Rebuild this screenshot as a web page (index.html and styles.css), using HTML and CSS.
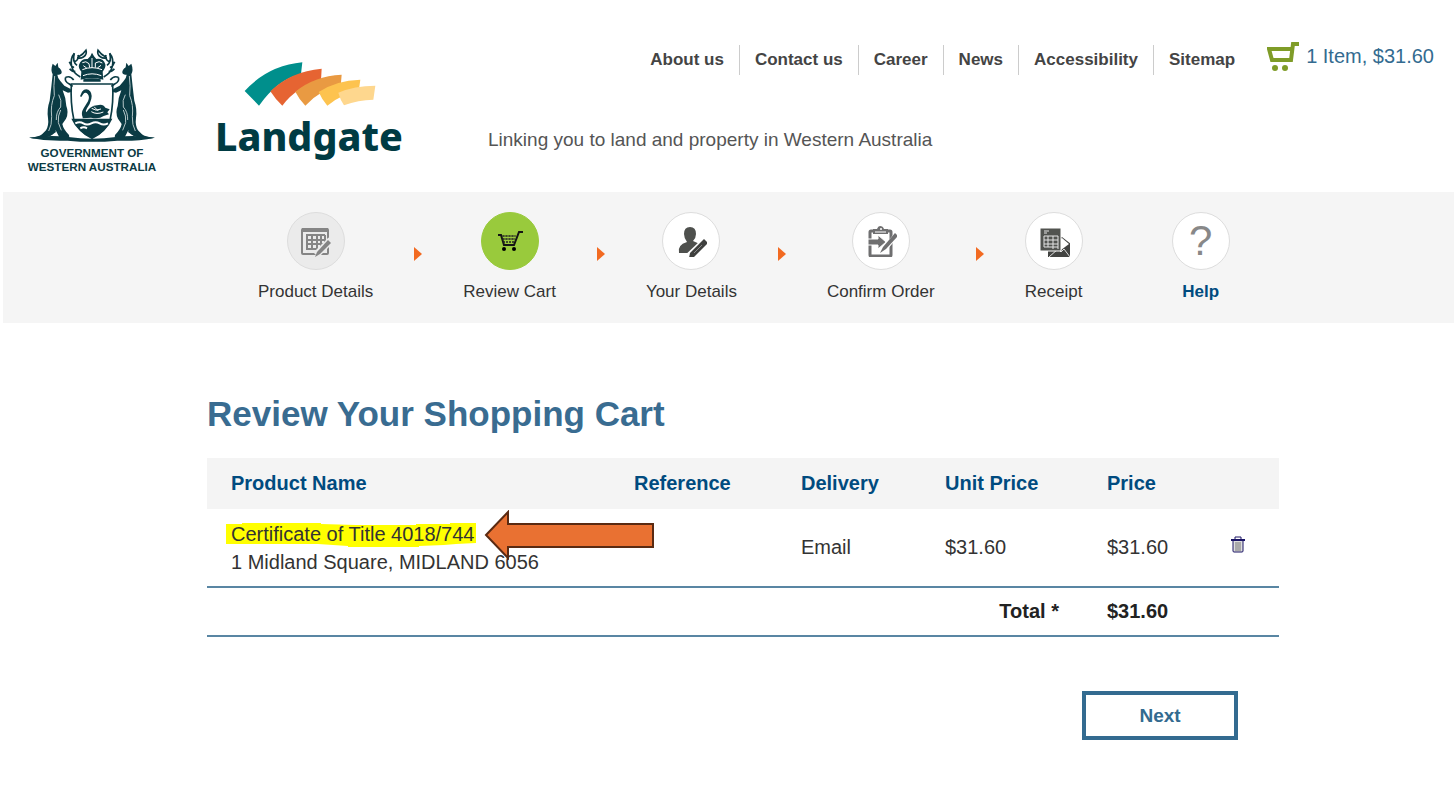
FILE: index.html
```html
<!DOCTYPE html>
<html lang="en">
<head>
    <meta charset="UTF-8">
    <meta name="viewport" content="width=device-width, initial-scale=1.0">
    <title>Landgate - Review Your Shopping Cart</title>
    <link rel="stylesheet" href="styles.css">
</head>
<body>
    <header class="header">
        <svg class="crest" viewBox="0 0 435 420" role="img" aria-label="Government of Western Australia">
            <defs>
                <g id="supporter">
                    <path d="M98 71 L106 78 L113 68 L115 82 Q126 90 125 98 Q123 104 112 104 Q113 114 121 123 L133 137 L152 147 L154 156 L144 158 L128 151 Q138 174 139 198 Q147 218 138 236 L127 252 Q130 268 147 285 L148 293 L118 292 L107 271 L98 283 L68 294 L60 289 L78 271 Q87 256 84 234 Q80 208 89 182 Q92 158 94 140 L98 103 Q91 90 98 71 Z"/>
                    <path d="M89 231 Q91 262 78 275 Q64 290 28 293 Q58 300 90 289 L108 276 Z"/>
                    <path class="crest-line" d="M137 112 Q151 106 161 120 M137 112 Q132 124 148 132 L158 139"/>
                    <path class="crest-hair" d="M104 108 Q100 137 103 167 Q91 195 95 230 Q96 255 86 273 M116 164 Q126 180 122 201 Q108 216 109 240 M122 210 Q113 227 115 248 L124 271"/>
                </g>
            </defs>
            <g class="crest-ink">
                <use href="#supporter"/>
                <use href="#supporter" transform="translate(432 0) scale(-1 1)"/>
                <path d="M27 293 Q90 284 145 291 Q216 302 288 291 Q345 284 405 293 Q345 305 292 302 Q216 309 143 302 Q84 305 27 293 Z"/>
                <path d="M154 236 H277 Q261 275 216 295 Q171 275 154 236 Z"/>
                <path d="M188 232 Q182 219 191 205 L204 184 Q210 170 203 162 Q196 155 190 162 L184 171 L180 169 L186 155 Q194 145 205 149 Q218 157 214 176 Q211 191 201 205 Q196 213 199 217 Q211 197 231 196 Q249 190 256 203 L269 208 L262 217 L267 223 L251 228 Q237 238 213 233 L188 235 Z"/>
                <path d="M177 74 Q183 55 203 57 L211 49 L216 38 L222 49 L229 57 Q250 54 256 73 Q258 83 248 95 L250 119 Q216 111 182 119 L184 95 Q174 83 177 74 Z"/>
            </g>
            <path class="crest-line" d="M154 132 H278 Q281 190 271 236 Q258 274 216 295 Q174 274 161 236 Q151 190 154 132 Z"/>
            <path class="crest-water" d="M166 250 Q179 243 190 250 T214 250 T239 250 T264 250 M181 265 Q191 259 201 265"/>
            <path class="crest-white" d="M215 205 Q227 215 243 207 M214 215 Q230 225 250 216 M222 200 L235 213 M187 89 Q216 77 246 89 M189 107 Q216 96 244 107 M187 68 Q198 61 207 71 L209 83 M226 83 L226 69 Q238 61 247 69 M216 54 V84 M190 77 L200 84 M232 84 L243 76"/>
            <path class="crest-line" d="M181 111 Q159 99 155 79 Q150 55 163 40 Q156 65 171 76 M164 65 Q178 59 174 45 M162 83 Q151 76 148 65 M166 94 Q155 95 149 86 M176 50 Q189 44 198 31 Q202 44 190 51 Q181 57 171 53 M251 111 Q273 99 277 79 Q282 55 269 40 Q276 65 261 76 M268 65 Q254 59 258 45 M270 83 Q281 76 284 65 M266 94 Q277 95 283 86 M256 50 Q243 44 234 31 Q230 44 242 51 Q251 57 261 53"/>
            <path class="crest-ink" d="M190 118 Q216 112 242 118 V125 H190 Z"/>
            <text class="crest-text" x="216" y="351">GOVERNMENT OF</text>
            <text class="crest-text" x="216" y="392">WESTERN AUSTRALIA</text>
        </svg>

        <svg class="logo" viewBox="0 0 630 360" role="img" aria-label="Landgate">
            <path fill="#008f8c" d="M119 123 Q188 47 292 37 L288 72 Q218 88 162 167 Z"/>
            <path fill="#e66432" d="M196 124 Q257 64 350 56 L348 91 Q275 110 232 167 Q211 148 196 124 Z"/>
            <path fill="#e99a42" d="M271 125 Q328 78 410 74 L407 109 Q345 119 301 167 Q283 149 271 125 Z"/>
            <path fill="#fdc34f" d="M341 126 Q393 91 466 89 L461 124 Q410 132 367 167 Q351 149 341 126 Z"/>
            <path fill="#fed78e" d="M400 128 Q448 107 511 107 L505 149 Q460 150 417 166 Q406 150 400 128 Z"/>
            <text class="logo-text" x="30" y="303">Landgate</text>
        </svg>

        <div class="header-main">
            <div class="header-top">
                <nav class="nav">
                    <a href="#">About us</a>
                    <a href="#">Contact us</a>
                    <a href="#">Career</a>
                    <a href="#">News</a>
                    <a href="#">Accessibility</a>
                    <a href="#">Sitemap</a>
                </nav>
                <a class="cart" href="#">
                    <svg class="cart-icon" viewBox="0 0 32 30" aria-hidden="true">
                        <path d="M32 2 H26 L24 18 H5 L2 7 H25" fill="none" stroke="#7f9c28" stroke-width="4"/>
                        <circle cx="8" cy="26" r="3" fill="#7f9c28"/>
                        <circle cx="18" cy="26" r="3" fill="#7f9c28"/>
                    </svg>
                    <span>1 Item, $31.60</span>
                </a>
            </div>
            <p class="tagline">Linking you to land and property in Western Australia</p>
        </div>
    </header>

    <ol class="steps">
        <li class="step">
            <span class="step-icon done">
                <svg viewBox="0 0 32 32" aria-hidden="true">
                    <rect x="2" y="4" width="26" height="25" rx="1" fill="none" stroke="#858585" stroke-width="2"/>
                    <path d="M2 5 H28" stroke="#858585" stroke-width="4"/>
                    <path d="M6 10 H25 M6 15 H25 M6 19 H25 M6 24 H20 M7 10 V25 M12 10 V25 M17 10 V25 M21 10 V22 M25 10 V18" fill="none" stroke="#858585" stroke-width="2"/>
                    <path d="M16 30 L31 15" stroke="#ebebeb" stroke-width="7"/>
                    <path d="M15 32 L17 27 L28 15 L31 18 L20 29 Z" fill="#858585"/>
                </svg>
            </span>
            <span>Product Details</span>
        </li>
        <li class="step-arrow"></li>
        <li class="step">
            <span class="step-icon current">
                <svg viewBox="0 0 32 32" aria-hidden="true">
                    <path d="M4 10 H7 L10 20 H20 L25 7 H29" fill="none" stroke="#151515" stroke-width="2"/>
                    <path d="M8 11 H22 M8 14 H21 M9 17 H20 M10 10 V19 M13 10 V19 M16 10 V19 M19 10 V19" stroke="#222" stroke-width="1" stroke-dasharray="2 1"/>
                    <circle cx="10" cy="24" r="2"/>
                    <circle cx="20" cy="24" r="2"/>
                </svg>
            </span>
            <span>Review Cart</span>
        </li>
        <li class="step-arrow"></li>
        <li class="step">
            <span class="step-icon">
                <svg viewBox="0 0 32 32" aria-hidden="true">
                    <path d="M15 2 Q21 2 21 9 Q21 13 18 16 L27 20 L22 28 H4 Q2 20 12 17 Q9 13 9 9 Q9 2 15 2 Z" fill="#4e504d"/>
                    <path d="M14 32 L32 15" stroke="#fff" stroke-width="8"/>
                    <path d="M14 33 L15 28 L29 14 L33 18 L19 32 Z" fill="#3f403e"/>
                    <path d="M19 28 L27 20" stroke="#888" stroke-width="1"/>
                </svg>
            </span>
            <span>Your Details</span>
        </li>
        <li class="step-arrow"></li>
        <li class="step">
            <span class="step-icon">
                <svg viewBox="0 0 32 32" aria-hidden="true">
                    <rect x="5" y="6" width="21" height="25" rx="1" fill="none" stroke="#6f6f70" stroke-width="3"/>
                    <path d="M8 4 H12 Q13 1 15 1 Q18 1 19 4 H23 V9 H8 Z" fill="#6f6f70"/>
                    <path d="M10 7 H21" stroke="#fff" stroke-width="1"/>
                    <circle cx="16" cy="4" r="1" fill="#fff"/>
                    <path d="M3 14 H13 V10 L21 17 L13 24 V20 H3 Z" fill="#6f6f70" stroke="#fff" stroke-width="1"/>
                    <path d="M18 26 L32 9" stroke="#fff" stroke-width="5"/>
                    <path d="M15 28 L18 22 L30 8 L33 11 L21 24 Z" fill="#6f6f70"/>
                </svg>
            </span>
            <span>Confirm Order</span>
        </li>
        <li class="step-arrow"></li>
        <li class="step">
            <span class="step-icon">
                <svg viewBox="0 0 32 32" aria-hidden="true">
                    <path d="M10 19 L24 12 L33 19 V33 H10 Z" fill="#424341"/>
                    <path d="M14 19 L24 13 L31 19 L23 25 Z" fill="#fff"/>
                    <path d="M11 32 L20 24 L23 27 L26 24 L32 32" fill="none" stroke="#ddd" stroke-width="1"/>
                    <path d="M2 3 H23 V26 H2 Z" fill="#51534f" stroke="#fff" stroke-width="1"/>
                    <path d="M6 6 H11 M6 8 H9 M6 11 H20 M6 15 H20 M6 19 H20 M6 22 H20 M6 11 V22 M10 11 V22 M15 11 V24 M20 11 V24" fill="none" stroke="#e4e4e4" stroke-width="1"/>
                </svg>
            </span>
            <span>Receipt</span>
        </li>
        <li class="step help">
            <a href="#">
                <span class="step-icon">?</span>
                <span>Help</span>
            </a>
        </li>
    </ol>

    <main class="main">
        <h1>Review Your Shopping Cart</h1>

        <table class="cart-table">
            <thead>
                <tr>
                    <th>Product Name</th>
                    <th class="col-reference">Reference</th>
                    <th class="col-delivery">Delivery</th>
                    <th class="col-unit">Unit Price</th>
                    <th class="col-price">Price</th>
                    <th class="col-remove"></th>
                </tr>
            </thead>
            <tbody>
                <tr>
                    <td class="product" colspan="2">
                        <div class="product-title">
                            <svg class="marker" viewBox="0 0 252 25" aria-hidden="true">
                                <path d="M0 2 H16 V1 H95 V2 L130 3 L190 3 V2 L224 2 V1 L250 1 V21 L230 22 L218 23 L193 24 V25 H122 V24 L92 22 H0 Z" fill="#ffff00"/>
                            </svg>
                            <span>Certificate of Title 4018/744</span>
                            <svg class="pointer" viewBox="0 0 170 50" aria-hidden="true">
                                <path d="M2 25 L24 2 V14 H169 V37 H24 V48 Z" fill="#e97132" stroke="#5a2a12" stroke-width="2"/>
                            </svg>
                        </div>
                        <div>1 Midland Square, MIDLAND 6056</div>
                    </td>
                    <td>Email</td>
                    <td>$31.60</td>
                    <td>$31.60</td>
                    <td>
                        <button class="remove" type="button" aria-label="Remove item">
                            <svg viewBox="0 0 14 17" aria-hidden="true">
                                <path d="M2 5 V15 Q2 16 3 16 H11 Q12 16 12 15 V5" fill="#ddd" stroke="#1a1464" stroke-width="1"/>
                                <path d="M5 6 V15 M7 6 V15 M9 6 V15" stroke="#777" stroke-width="1"/>
                                <path d="M0 4 H14" stroke="#1a1464" stroke-width="2"/>
                                <path d="M4 3 V1 H10 V3" fill="none" stroke="#1a1464" stroke-width="1"/>
                            </svg>
                        </button>
                    </td>
                </tr>
            </tbody>
            <tfoot>
                <tr>
                    <td class="total-label" colspan="4">Total *</td>
                    <td>$31.60</td>
                    <td></td>
                </tr>
            </tfoot>
        </table>

        <div class="actions">
            <button class="next" type="button">Next</button>
        </div>
    </main>
</body>
</html>
```
FILE: styles.css
```css
* {
    box-sizing: border-box;
}
body {
    margin: 0;
    background: #fff;
    color: #333;
    font-family: "Liberation Sans", Arial, sans-serif;
    font-size: 20px;
}
a {
    color: inherit;
    text-decoration: none;
}

/* Header */
.header {
    display: flex;
    padding: 40px 20px 12px 20px;
}
.crest {
    flex: none;
    width: 145px;
    height: 140px;
}
.crest-ink {
    fill: #0b3b44;
}
.crest-line {
    fill: none;
    stroke: #0b3b44;
    stroke-width: 5;
}
.crest-hair {
    fill: none;
    stroke: #b5c6c8;
    stroke-width: 3;
}
.crest-white,
.crest-water {
    fill: none;
    stroke: #fff;
    stroke-width: 3;
}
.crest-water {
    stroke-width: 6;
}
.crest-text {
    fill: #0b3b44;
    font-size: 35px;
    font-weight: bold;
    text-anchor: middle;
}
.logo {
    flex: none;
    width: 210px;
    height: 120px;
    margin: 10px 0 0 40px;
}
.logo-text {
    fill: #003b43;
    font-family: "Noto Sans", sans-serif;
    font-size: 118px;
    font-weight: 800;
}
.header-main {
    flex: 1;
    padding-left: 73px;
}
.header-top {
    display: flex;
    justify-content: flex-end;
    gap: 17px;
    height: 38px;
}
.nav {
    display: flex;
    margin-top: 5px;
    color: #444;
    font-size: 17px;
    font-weight: bold;
    line-height: 30px;
}
.nav a {
    height: 30px;
    padding: 0 15px;
}
.nav a + a {
    border-left: 1px solid #ccc;
}
.cart {
    display: flex;
    gap: 7px;
    margin-top: 2px;
    color: #336b90;
    line-height: 28px;
}
.cart-icon {
    width: 32px;
    height: 30px;
}
.tagline {
    margin: 50px 0 0;
    color: #555;
    font-size: 19px;
    line-height: 24px;
}

/* Checkout steps */
.steps {
    display: flex;
    align-items: center;
    gap: 41px;
    margin: 0 0 0 3px;
    padding: 20px 0 21px 255px;
    background: #f5f5f5;
    font-size: 17px;
    list-style: none;
}
.step,
.help a {
    display: flex;
    flex-direction: column;
    align-items: center;
    gap: 12px;
    line-height: 20px;
    white-space: nowrap;
}
.step-icon {
    display: flex;
    align-items: center;
    justify-content: center;
    width: 58px;
    height: 58px;
    border: 1px solid #ddd;
    border-radius: 50%;
    background: #fff;
}
.step-icon svg {
    width: 32px;
    height: 32px;
}
.step-icon.done {
    background: #ebebeb;
}
.step-icon.current {
    border-color: #99ca3c;
    background: #99ca3c;
}
.step-arrow {
    margin-bottom: 6px;
    border: 7px solid transparent;
    border-right: 0;
    border-left: 8px solid #f26a21;
}
.help {
    margin-left: 48px;
    color: #004b7f;
    font-weight: bold;
}
.help .step-icon {
    color: #888;
    font-size: 42px;
    font-weight: normal;
}

/* Cart */
.main {
    padding: 70px 175px 45px 207px;
}
h1 {
    margin: 0 0 23px;
    color: #396c91;
    font-size: 35px;
    line-height: 42px;
}
.cart-table {
    width: 100%;
    border-collapse: collapse;
    table-layout: fixed;
}
.cart-table th,
.cart-table td {
    padding: 0 0 0 24px;
    text-align: left;
}
.cart-table th {
    height: 51px;
    background: #f4f4f4;
    color: #004b7f;
}
.cart-table tbody td {
    height: 78px;
    border-bottom: 2px solid #5986a3;
}
.cart-table tfoot td {
    height: 49px;
    border-bottom: 2px solid #5986a3;
    color: #222;
    font-weight: bold;
}
.cart-table .total-label {
    padding-right: 24px;
    text-align: right;
}
.col-reference {
    width: 167px;
}
.col-delivery {
    width: 144px;
}
.col-unit {
    width: 162px;
}
.col-price {
    width: 124px;
}
.col-remove {
    width: 72px;
}
.product {
    line-height: 28px;
}
.product-title {
    position: relative;
    width: max-content;
}
.product-title span {
    position: relative;
}
/* highlighter stroke and arrow drawn over the row */
.marker {
    position: absolute;
    top: 2px;
    left: -5px;
    width: 252px;
    height: 25px;
}
.pointer {
    position: absolute;
    top: -10px;
    left: 100%;
    width: 170px;
    height: 50px;
    margin-left: 10px;
}
.remove {
    display: block;
    padding: 0 0 7px;
    border: 0;
    background: none;
    cursor: pointer;
}
.remove svg {
    display: block;
    width: 14px;
    height: 17px;
}
.actions {
    display: flex;
    justify-content: flex-end;
    padding: 54px 41px 0 0;
}
.next {
    width: 156px;
    height: 49px;
    border: 4px solid #336b90;
    background: #fff;
    color: #336b90;
    font: bold 19px "Liberation Sans", Arial, sans-serif;
    cursor: pointer;
}
```
